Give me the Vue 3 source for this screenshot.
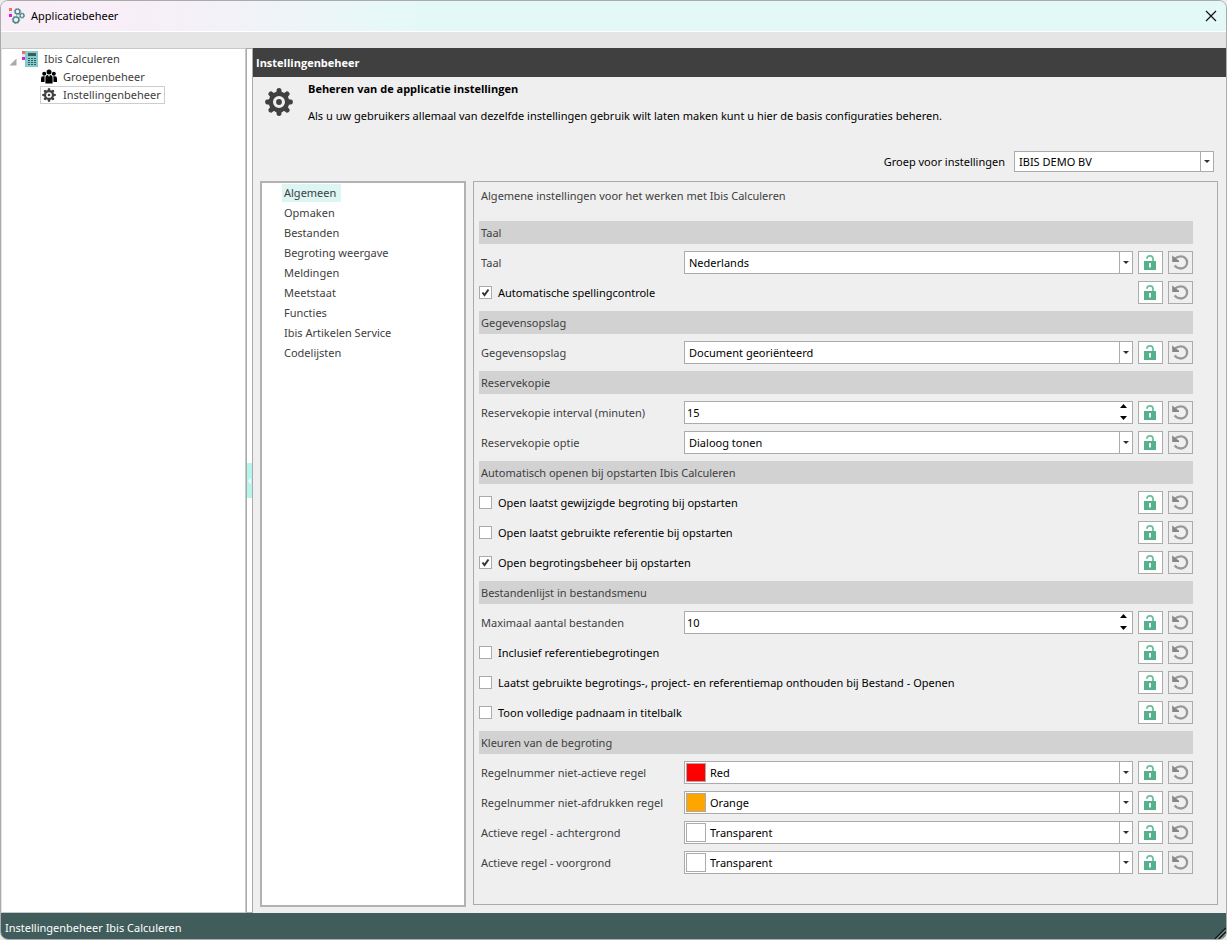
<script setup>
import { reactive, ref } from 'vue'

const group = ref('IBIS DEMO BV')
const category = ref('Algemeen')
const categories = [
  'Algemeen', 'Opmaken', 'Bestanden', 'Begroting weergave', 'Meldingen',
  'Meetstaat', 'Functies', 'Ibis Artikelen Service', 'Codelijsten',
]

const rows = reactive([
  { type: 'head', label: 'Taal' },
  { type: 'select', label: 'Taal', value: 'Nederlands' },
  { type: 'check', label: 'Automatische spellingcontrole', value: true },
  { type: 'head', label: 'Gegevensopslag' },
  { type: 'select', label: 'Gegevensopslag', value: 'Document georiënteerd' },
  { type: 'head', label: 'Reservekopie' },
  { type: 'number', label: 'Reservekopie interval (minuten)', value: 15 },
  { type: 'select', label: 'Reservekopie optie', value: 'Dialoog tonen' },
  { type: 'head', label: 'Automatisch openen bij opstarten Ibis Calculeren' },
  { type: 'check', label: 'Open laatst gewijzigde begroting bij opstarten', value: false },
  { type: 'check', label: 'Open laatst gebruikte referentie bij opstarten', value: false },
  { type: 'check', label: 'Open begrotingsbeheer bij opstarten', value: true },
  { type: 'head', label: 'Bestandenlijst in bestandsmenu' },
  { type: 'number', label: 'Maximaal aantal bestanden', value: 10 },
  { type: 'check', label: 'Inclusief referentiebegrotingen', value: false },
  { type: 'check', label: 'Laatst gebruikte begrotings-, project- en referentiemap onthouden bij Bestand - Openen', value: false },
  { type: 'check', label: 'Toon volledige padnaam in titelbalk', value: false },
  { type: 'head', label: 'Kleuren van de begroting' },
  { type: 'color', label: 'Regelnummer niet-actieve regel', value: 'Red' },
  { type: 'color', label: 'Regelnummer niet-afdrukken regel', value: 'Orange' },
  { type: 'color', label: 'Actieve regel - achtergrond', value: 'Transparent' },
  { type: 'color', label: 'Actieve regel - voorgrond', value: 'Transparent' },
])
</script>

<template>
  <div class="window">
    <header class="titlebar">
      <svg class="app-icon" viewBox="0 0 16 16" aria-hidden="true">
        <rect x="0" y="0" width="3" height="3" fill="#f0705a" />
        <rect x="0" y="3" width="3" height="3" fill="#dfe3ee" />
        <rect x="0" y="6" width="3" height="3" fill="#e815e8" />
        <g fill="none" stroke="#4f8a8a">
          <circle cx="8.5" cy="3.5" r="2.4" stroke-width="1.4" />
          <circle cx="8.5" cy="3.5" r="3.3" stroke-width="0.9" stroke-dasharray="1.2 1.4" />
          <circle cx="13" cy="7.6" r="1.9" stroke-width="1.2" />
          <circle cx="13" cy="7.6" r="2.7" stroke-width="0.8" stroke-dasharray="1.1 1.1" />
          <circle cx="7" cy="11.8" r="2.9" stroke-width="1.5" />
          <circle cx="7" cy="11.8" r="3.8" stroke-width="0.9" stroke-dasharray="1.4 1.5" />
        </g>
      </svg>
      <span class="title">Applicatiebeheer</span>
      <button class="close" type="button" aria-label="Sluiten">
        <svg viewBox="0 0 12 12"><path d="M1 1 11 11M11 1 1 11" stroke="#111" stroke-width="1.2" fill="none" /></svg>
      </button>
    </header>
    <div class="toolbar"></div>

    <div class="body">
      <nav class="tree">
        <div class="node root">
          <svg class="expander" viewBox="0 0 8 8" aria-hidden="true"><path d="M7.5 0.5V7.5H0.5Z" fill="#a9a9a9" /></svg>
          <svg class="icon" viewBox="0 0 16 16" aria-hidden="true">
            <rect x="3" width="13" height="16" fill="#80cdca" />
            <rect width="3" height="3" fill="#f0705a" />
            <rect y="3" width="3" height="3" fill="#e3e6f0" />
            <rect y="6" width="3" height="3" fill="#e815e8" />
            <rect x="6" y="2" width="8" height="3" fill="#3f5c5c" />
            <g fill="#3f5c5c">
              <rect x="6" y="7" width="2" height="1" /><rect x="9" y="7" width="2" height="1" /><rect x="12" y="7" width="2" height="1" />
              <rect x="6" y="9" width="2" height="1" /><rect x="9" y="9" width="2" height="1" /><rect x="12" y="9" width="2" height="1" />
              <rect x="6" y="11" width="2" height="1" /><rect x="9" y="11" width="2" height="1" /><rect x="12" y="11" width="2" height="1" />
              <rect x="6" y="13" width="2" height="1" /><rect x="9" y="13" width="2" height="1" /><rect x="12" y="13" width="2" height="1" />
            </g>
          </svg>
          <a href="#" class="node-label">Ibis Calculeren</a>
        </div>
        <div class="node child">
          <svg class="icon" viewBox="0 0 16 16" aria-hidden="true">
            <g fill="#000">
              <circle cx="8" cy="3" r="2.5" /><circle cx="3.2" cy="4.7" r="2" /><circle cx="12.8" cy="4.7" r="2" />
              <path d="M4.4 14.5V9Q4.4 6 7 6L8 8 9 6Q11.6 6 11.6 9V14.5Z" />
              <path d="M0 13V9.5Q0 7.2 2 7.2H3.8Q3.6 8 3.6 9V13Z" />
              <path d="M16 13V9.5Q16 7.2 14 7.2H12.2Q12.4 8 12.4 9V13Z" />
            </g>
          </svg>
          <a href="#" class="node-label">Groepenbeheer</a>
        </div>
        <div class="node child selected">
          <svg class="icon" viewBox="0 0 28 28" aria-hidden="true">
            <g fill="#404040">
              <path v-for="n in 8" :key="n" d="M11 6 11.8 1Q14 -0.8 16.2 1L17 6Z" :transform="`rotate(${n * 45} 14 14)`" />
            </g>
            <circle cx="14" cy="14" r="7.8" fill="none" stroke="#404040" stroke-width="4.2" />
            <circle cx="14" cy="14" r="2.6" fill="#404040" />
          </svg>
          <a href="#" class="node-label">Instellingenbeheer</a>
        </div>
      </nav>

      <div class="splitter">
        <button type="button" aria-label="Paneel inklappen">
          <svg viewBox="0 0 3 6"><path d="M3 0V6L0 3Z" fill="#fff" /></svg>
        </button>
      </div>

      <main class="main">
        <h1 class="main-title">Instellingenbeheer</h1>
        <section class="intro">
          <svg class="gear" viewBox="0 0 28 28" aria-hidden="true">
            <g fill="#404040">
              <path v-for="n in 8" :key="n" d="M11 6 11.8 1Q14 -0.8 16.2 1L17 6Z" :transform="`rotate(${n * 45} 14 14)`" />
            </g>
            <circle cx="14" cy="14" r="8.2" fill="none" stroke="#404040" stroke-width="4.4" />
            <circle cx="14" cy="14" r="2.9" fill="#404040" />
          </svg>
          <div>
            <h2>Beheren van de applicatie instellingen</h2>
            <p>Als u uw gebruikers allemaal van dezelfde instellingen gebruik wilt laten maken kunt u hier de basis configuraties beheren.</p>
          </div>
        </section>

        <div class="group">
          <label for="group">Groep voor instellingen</label>
          <div class="combo">
            <select id="group" v-model="group"><option>IBIS DEMO BV</option></select>
            <span class="drop"></span>
          </div>
        </div>

        <div class="columns">
          <ul class="categories">
            <li v-for="c in categories" :key="c">
              <button type="button" :class="{ active: c === category }" @click="category = c">{{ c }}</button>
            </li>
          </ul>

          <section class="panel">
            <p class="panel-text">Algemene instellingen voor het werken met Ibis Calculeren</p>
            <div class="settings">
              <template v-for="(r, i) in rows" :key="i">
                <h3 v-if="r.type === 'head'">{{ r.label }}</h3>
                <div v-else class="row">
                  <label v-if="r.type === 'check'" class="check">
                    <input v-model="r.value" type="checkbox" />
                    <svg v-if="r.value" class="tick" viewBox="0 0 13 13" aria-hidden="true"><path d="M3.5 6.5 5.5 9 9.5 3.5" fill="none" stroke="#333" stroke-width="2" /></svg>
                    <span>{{ r.label }}</span>
                  </label>
                  <template v-else>
                    <label class="name" :for="`field-${i}`">{{ r.label }}</label>
                    <div v-if="r.type === 'number'" class="spin">
                      <input :id="`field-${i}`" v-model.number="r.value" type="text" inputmode="numeric" />
                      <div class="arrows">
                        <button type="button" aria-label="Verhogen" @click="r.value++"><svg viewBox="0 0 7 4"><path d="M0 4 3.5 0 7 4Z" /></svg></button>
                        <button type="button" aria-label="Verlagen" @click="r.value--"><svg viewBox="0 0 7 4"><path d="M0 0 3.5 4 7 0Z" /></svg></button>
                      </div>
                    </div>
                    <div v-else class="combo">
                      <span v-if="r.type === 'color'" class="swatch" :class="r.value.toLowerCase()"></span>
                      <select :id="`field-${i}`" v-model="r.value">
                        <option>{{ r.value }}</option>
                      </select>
                      <span class="drop"></span>
                    </div>
                  </template>
                  <button class="tool lock" type="button" aria-label="Vergrendelen">
                    <svg viewBox="0 0 13 15">
                      <path d="M2.9 3.8Q2.9 0.9 5.9 0.9Q9 0.9 9 4V7" fill="none" stroke="#6cc0a0" stroke-width="1.8" />
                      <rect x="0" y="6" width="12" height="9" fill="#56b08b" />
                      <path d="M5 8H7V12.5H5Z" fill="#e8f5f0" />
                    </svg>
                  </button>
                  <button class="tool undo" type="button" aria-label="Herstellen">
                    <svg viewBox="0 0 17 15">
                      <path d="M2.8 3.6Q5.2 1.3 9 1.3A6.1 6.1 0 0 1 9 13.5Q5.2 13.5 2.6 10.6" fill="none" stroke="#999" stroke-width="2.3" />
                      <path d="M0.2 0.2V7H7V5.4L3.6 3.4Z" fill="#868686" />
                    </svg>
                  </button>
                </div>
              </template>
            </div>
          </section>
        </div>
      </main>
    </div>

    <footer class="status">
      <span>Instellingenbeheer Ibis Calculeren</span>
      <svg class="grip" viewBox="0 0 12 12" aria-hidden="true">
        <path d="M1 12 12 1M5 12 12 5M9 12 12 9" stroke="#0d1a1a" stroke-width="1.6" />
        <path d="M2.5 12 12 2.5M6.5 12 12 6.5" stroke="#c6d2d1" stroke-width="0.8" />
      </svg>
    </footer>
  </div>
</template>

<style>
html, body { background: #ececec; }
</style>

<style scoped>
* { box-sizing: border-box; }
.window {
  display: flex;
  flex-direction: column;
  min-height: 100vh;
  overflow: hidden;
  border: 1px solid #ababab;
  border-radius: 8px;
  background: #efefef;
  color: #404040;
  font: 11px/16px "Noto Sans", "Open Sans", sans-serif;
}
h1, h2, h3, p, ul { margin: 0; padding: 0; font-size: 11px; }
h1, h2 { font-family: "Open Sans", "Noto Sans", sans-serif; }
button, input, select { font: inherit; margin: 0; padding: 0; border: 0; background: none; color: #000; }
svg { display: block; flex: none; }

.titlebar {
  display: flex;
  align-items: center;
  height: 31px;
  padding: 0 9px 0 8px;
  border-bottom: 1px solid #fff;
  background: linear-gradient(90deg, #f9eef8 0, #f7eff8 12%, #eef4f8 24%, #e4f9f7 34%, #e3f9f7 100%);
  color: #000;
}
.app-icon { width: 16px; height: 16px; }
.title { margin-left: 6px; }
.close { margin-left: auto; }
.close svg { width: 12px; height: 12px; }
.toolbar { height: 16px; background: #e5e5e5; }

.body { display: flex; flex: 1; }
.tree {
  flex: none;
  width: 245px;
  padding-top: 1px;
  border: 1px solid #c8c8c8;
  border-left-color: #e4e4e4;
  background: #fff;
}
.node { display: flex; align-items: center; height: 18px; }
.root { padding-left: 7px; }
.expander { width: 8px; height: 8px; margin-right: 5px; margin-top: 5px; }
.icon { width: 16px; height: 16px; }
.node-label { margin-left: 6px; color: #404040; text-decoration: none; white-space: nowrap; }
.child { width: max-content; margin-left: 38px; padding: 0 3px 0 0; border: 1px solid transparent; }
.selected { border-color: #cdcdcd; }
.selected .icon { width: 14px; height: 14px; margin: 0 1px; }
.splitter {
  display: flex;
  align-items: center;
  flex: none;
  width: 7px;
  border: 1px solid #ababab;
  background: #fff;
}
.splitter button { display: flex; align-items: center; justify-content: center; width: 5px; height: 35px; background: #b6f5ec; }
.splitter svg { width: 3px; height: 6px; }

.main { display: flex; flex-direction: column; flex: 1; min-width: 0; }
.main-title { height: 29px; padding-left: 3px; background: #404040; color: #fff; line-height: 29px; }
.intro { display: flex; height: 74px; padding: 4px 12px 0; color: #000; }
.gear { width: 28px; height: 28px; margin: 7px 15px 0 0; }
.intro p { margin-top: 11px; }
.group { display: flex; align-items: center; justify-content: flex-end; gap: 9px; padding: 0 12px 0 8px; color: #000; }
.group .combo { flex: none; width: 200px; height: 21px; }

.columns { display: flex; flex: 1; gap: 7px; padding: 9px 8px 6px 7px; }
.categories { flex: none; width: 206px; padding: 0 0 0 20px; border: 2px solid #b2b2b2; background: #fff; list-style: none; }
.categories li { display: flex; align-items: center; height: 20px; }
.categories button { height: 18px; padding: 0 5px 0 2px; color: #404040; white-space: nowrap; }
.categories .active { background: #dcf6f4; }

.panel { flex: 1; min-width: 0; margin-bottom: 2px; padding: 6px 24px 29px 5px; border: 1px solid #ababab; }
.panel-text { padding-left: 2px; }
.settings { display: flex; flex-direction: column; gap: 7px; margin-top: 17px; }
h3 { height: 23px; padding-left: 2px; background: #d2d2d2; font-weight: normal; line-height: 23px; }
.row { display: flex; gap: 5px; height: 23px; }
.name { flex: none; width: 200px; padding-left: 2px; line-height: 23px; white-space: nowrap; }

.combo { position: relative; display: flex; align-items: center; flex: 1; border: 1px solid #ababab; background: #fff; }
.combo select { flex: 1; align-self: stretch; min-width: 0; padding: 0 16px 0 4px; appearance: none; outline: none; }
.drop { position: absolute; top: 0; right: 0; bottom: 0; display: flex; align-items: center; justify-content: center; width: 13px; border-left: 1px solid #ababab; pointer-events: none; }
.drop::before { content: ""; border: 3px solid transparent; border-top-color: #303030; border-bottom: 0; }
.swatch { flex: none; width: 20px; height: 19px; margin-left: 1px; border: 1px solid #ababab; }
.red { background: #f00; }
.orange { background: #ffa500; }

.spin { display: flex; flex: 1; border: 1px solid #ababab; background: #fff; }
.spin input { flex: 1; min-width: 0; padding-left: 2px; outline: none; }
.arrows { display: flex; flex-direction: column; justify-content: space-between; padding: 2px 5px 3px; }
.arrows svg { width: 7px; height: 4px; fill: #000; }
.arrows button { display: block; }

.check { position: relative; display: flex; align-items: center; flex: 1; color: #000; white-space: nowrap; }
.check input { width: 13px; height: 13px; margin-right: 6px; border: 1px solid #ababab; background: #fff; appearance: none; }
.tick { position: absolute; left: 0; width: 13px; height: 13px; pointer-events: none; }

.tool { display: flex; align-items: center; justify-content: center; width: 25px; border: 1px solid #ababab; }
.lock { background: #fff; }
.lock svg { width: 13px; height: 15px; }
.undo svg { width: 17px; height: 15px; }

.status { display: flex; justify-content: space-between; align-items: flex-end; height: 26px; padding-left: 4px; background: #405d5c; color: #fff; }
.status span { line-height: 22px; }
.grip { width: 12px; height: 12px; }
</style>
